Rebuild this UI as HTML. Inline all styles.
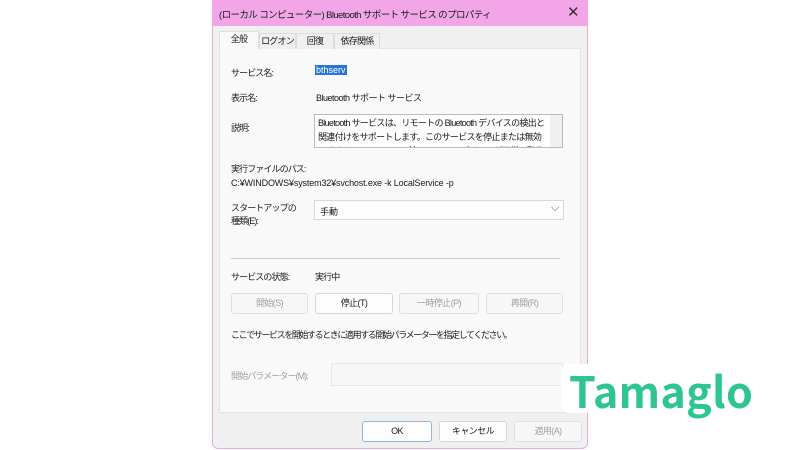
<!DOCTYPE html>
<html><head><meta charset="utf-8"><style>
*{margin:0;padding:0;box-sizing:border-box}
body{width:800px;height:450px;background:#fff;position:relative;overflow:hidden;font-family:"Liberation Sans","Noto Sans CJK JP",sans-serif;font-size:9px;color:#1a1a1a}
.a{position:absolute;white-space:nowrap}
.j{letter-spacing:-0.9px}
.win{position:absolute;left:212px;top:0;width:376px;height:449px;background:#f0f0f0;border:1px solid #e2b0dc;border-radius:0 0 6px 6px}
.title{position:absolute;left:212px;top:0;width:376px;height:26px;background:#f2a6e8}
.panel{position:absolute;left:219px;top:48px;width:362px;height:365px;background:#f9f9f9;border:1px solid #e5e5e5}
.tab{position:absolute;top:33px;height:16px;border:1px solid #ddd;border-bottom:none;background:#f0f0f0;text-align:center;line-height:15px;white-space:nowrap;letter-spacing:-0.8px}
.btn{position:absolute;height:21px;border:1px solid #e0e0e0;background:#f7f7f7;border-radius:3px;text-align:center;line-height:19px;color:#a0a0a0;letter-spacing:-0.6px;white-space:nowrap}
.btn.on{background:#fdfdfd;color:#1a1a1a;border-color:#d6d6d6}
.box{position:absolute;border:1px solid #d8d8d8;background:#fdfdfd}
</style></head><body>
<div class="win"></div>
<div class="title"></div>
<div class="a" style="left:219px;top:7px;font-size:9.5px;letter-spacing:-0.6px">(ローカル コンピューター) Bluetooth サポート サービス のプロパティ</div>
<div class="a" style="left:567px;top:3px;font-size:15px;color:#333">✕</div>
<div class="panel"></div>
<div class="tab" style="left:219px;top:31px;width:40px;height:18px;background:#f9f9f9;border-color:#e0e0e0">全般</div>
<div class="tab" style="left:259px;width:37px">ログオン</div>
<div class="tab" style="left:296px;width:38px">回復</div>
<div class="tab" style="left:334px;width:46px">依存関係</div>
<div class="a j" style="left:231px;top:66px">サービス名:</div>
<div class="a" style="left:315px;top:65px;background:#2a74d6;color:#fff;padding:0 1px">bthserv</div>
<div class="a j" style="left:231px;top:91px">表示名:</div>
<div class="a" style="left:316px;top:91px;letter-spacing:-0.5px">Bluetooth サポート サービス</div>
<div class="a j" style="left:231px;top:121px">説明:</div>
<div class="box" style="left:314px;top:114px;width:249px;height:34px;overflow:hidden;border-color:#bbb"><div style="position:absolute;left:3px;top:1px;line-height:14px;white-space:normal;width:228px;letter-spacing:-0.7px">Bluetooth サービスは、リモートの Bluetooth デバイスの検出と関連付けをサポートします。このサービスを停止または無効にすると、インストール済み Bluetooth デバイスが正常に動作しなく</div><div style="position:absolute;right:0;top:0;width:12px;height:34px;background:#f0f0f0"></div></div>
<div class="a j" style="left:231px;top:162px">実行ファイルのパス:</div>
<div class="a" style="left:231px;top:178px;letter-spacing:-0.15px">C:¥WINDOWS¥system32¥svchost.exe -k LocalService -p</div>
<div class="a j" style="left:231px;top:202px;line-height:13px">スタートアップの<br>種類(E):</div>
<div class="box" style="left:314px;top:200px;width:250px;height:20px"><span class="a" style="left:5px;top:4px">手動</span><span class="a" style="left:236px;top:1px;color:#555;font-size:11px">⌵</span></div>
<div style="position:absolute;left:231px;top:258px;width:329px;height:1px;background:#ccc"></div>
<div class="a j" style="left:231px;top:270px">サービスの状態:</div>
<div class="a j" style="left:315px;top:270px">実行中</div>
<div class="btn" style="left:231px;top:293px;width:77px">開始(S)</div>
<div class="btn on" style="left:315px;top:293px;width:78px">停止(T)</div>
<div class="btn" style="left:399px;top:293px;width:80px">一時停止(P)</div>
<div class="btn" style="left:486px;top:293px;width:77px">再開(R)</div>
<div class="a" style="left:231px;top:328px;letter-spacing:-1.4px">ここでサービスを開始するときに適用する開始パラメーターを指定してください。</div>
<div class="a j" style="left:231px;top:369px;color:#a0a0a0">開始パラメーター(M):</div>
<div class="box" style="left:331px;top:363px;width:232px;height:23px;background:#f7f7f7;border-color:#e8e8e8"></div>
<div class="btn on" style="left:362px;top:421px;width:70px;border-color:#8fb6df">OK</div>
<div class="btn on" style="left:439px;top:421px;width:68px">キャンセル</div>
<div class="btn" style="left:514px;top:421px;width:68px">適用(A)</div>
<div style="position:absolute;left:561px;top:364px;width:250px;height:49px;background:#fff;border-radius:8px"></div>
<div class="a" style="left:569px;top:359px;font-size:43px;font-weight:bold;color:#2ec592;font-family:'Noto Sans CJK JP','Liberation Sans',sans-serif;letter-spacing:0.3px">Tamaglo</div>
</body></html>
